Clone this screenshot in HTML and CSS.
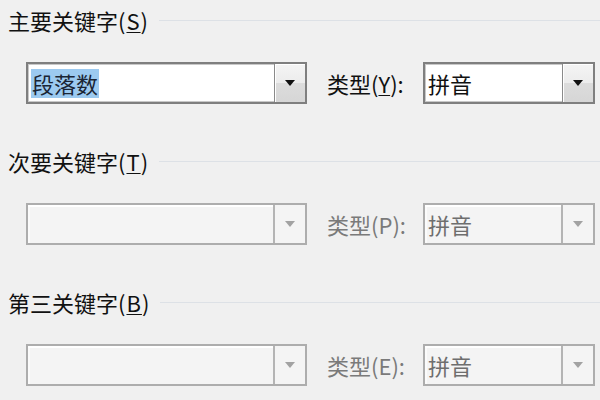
FILE: index.html
```html
<!DOCTYPE html>
<html lang="zh-CN">
<head>
<meta charset="utf-8">
<link rel="stylesheet" href="styles.css">
</head>
<body>
<div class="dialog">
  <section class="group">
    <div class="group-head"><span class="group-title">主要关键字<span class="key">(<u>S</u>)</span></span><span class="rule"></span></div>
    <div class="row">
      <div class="combo combo-main active"><span class="value"><span class="sel">段落数</span></span><span class="btn"><span class="arrow"></span></span></div>
      <span class="label">类型<span class="key">(<u>Y</u>)</span>:</span>
      <div class="combo combo-type active"><span class="value">拼音</span><span class="btn"><span class="arrow"></span></span></div>
    </div>
  </section>
  <section class="group">
    <div class="group-head"><span class="group-title">次要关键字<span class="key">(<u>T</u>)</span></span><span class="rule"></span></div>
    <div class="row">
      <div class="combo combo-main disabled"><span class="value"></span><span class="btn"><span class="arrow"></span></span></div>
      <span class="label dim">类型<span class="key">(P)</span>:</span>
      <div class="combo combo-type disabled"><span class="value">拼音</span><span class="btn"><span class="arrow"></span></span></div>
    </div>
  </section>
  <section class="group">
    <div class="group-head"><span class="group-title">第三关键字<span class="key">(<u>B</u>)</span></span><span class="rule"></span></div>
    <div class="row">
      <div class="combo combo-main disabled"><span class="value"></span><span class="btn"><span class="arrow"></span></span></div>
      <span class="label dim">类型<span class="key">(E)</span>:</span>
      <div class="combo combo-type disabled"><span class="value">拼音</span><span class="btn"><span class="arrow"></span></span></div>
    </div>
  </section>
</div>
</body>
</html>
```
FILE: styles.css
```css
html, body {
  margin: 0;
  padding: 0;
  background: #f0f0f0;
}
body {
  width: 600px;
  height: 400px;
  overflow: hidden;
  font-family: "Noto Sans CJK SC", "Noto Sans", sans-serif;
  font-size: 22px;
  color: #111;
}
.dialog {
  display: flex;
  flex-direction: column;
  gap: 45px;
  padding: 8px 0 0 8px;
}
.group {
  display: flex;
  flex-direction: column;
  gap: 30px;
}
.group-head {
  display: flex;
  align-items: center;
  height: 24px;
  gap: 10px;
}
.group-title {
  line-height: 24px;
  white-space: nowrap;
}
.group-title .key {
  letter-spacing: 1px;
}
.key u {
  text-underline-offset: 2px;
  text-decoration-thickness: 1px;
}
.rule {
  flex: 1;
  height: 1px;
  background: #dde1e6;
}
.row {
  display: flex;
  align-items: center;
  height: 42px;
  padding-left: 18px;
}
.label {
  margin-left: 20px;
  width: 78px;
  margin-right: 18px;
  white-space: nowrap;
}
.label.dim {
  color: #7a7a7a;
}
.combo {
  box-sizing: border-box;
  height: 42px;
  display: flex;
  border: 2px solid #9a9a9a;
}
.combo-main { width: 281px; }
.combo-type { width: 172px; }
.combo.active {
  background: #fff;
  border-color: #7f7f7f;
  box-shadow: inset 0 0 0 1px #c8c8c8;
}
.combo.disabled {
  background: #f4f4f4;
  border-color: #adadad;
  box-shadow: inset 0 2px 0 #ffffff, inset 2px 0 0 #fbfbfb;
  color: #6e6e6e;
}
.value {
  flex: 1;
  display: flex;
  align-items: center;
  padding-left: 3px;
  line-height: 29px;
}
.sel {
  background: #9ccaf0;
  color: #1a2535;
  padding: 0 1px;
}
.btn {
  width: 30px;
  display: flex;
  align-items: center;
  justify-content: center;
  border-left: 1px solid #9a9a9a;
}
.active .btn {
  background: linear-gradient(#f4f4f4 0%, #ececec 50%, #dcdcdc 51%, #d6d6d6 100%);
  border-left: 1px solid #8a8a8a;
  box-shadow: inset 1px 1px 0 #ffffff;
}
.disabled .btn {
  background: #f4f4f4;
  border-left: 2px solid #b4b4b4;
}
.arrow {
  width: 0;
  height: 0;
  border-left: 5px solid transparent;
  border-right: 5px solid transparent;
  border-top: 6px solid #111;
}
.disabled .arrow {
  border-top-color: #a2a2a2;
}
```
